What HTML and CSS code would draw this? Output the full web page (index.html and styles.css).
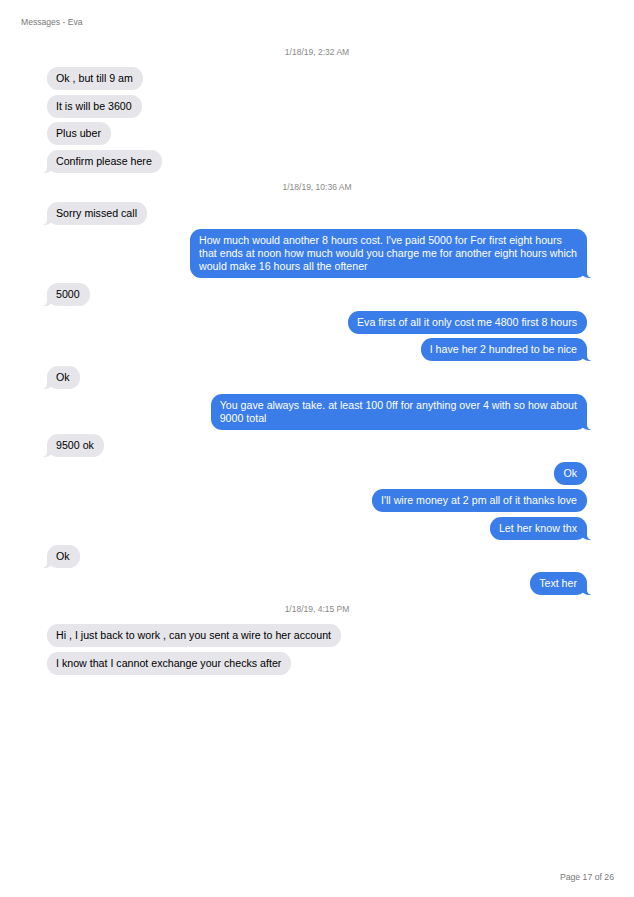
FILE: index.html
```html
<!DOCTYPE html>
<html lang="en">
<head>
  <meta charset="UTF-8" />
  <title>Messages - Eva</title>
  <link rel="stylesheet" href="styles.css">
</head>
<body>
  <div class="page">
    <div class="page-header">Messages - Eva</div>

    <div class="thread">
      <div class="stamp">1/18/19, 2:32 AM</div>
      <div class="msg them">Ok , but till 9 am</div>
      <div class="msg them">It is will be 3600</div>
      <div class="msg them">Plus uber</div>
      <div class="msg them tail">Confirm please here</div>

      <div class="stamp">1/18/19, 10:36 AM</div>
      <div class="msg them tail">Sorry missed call</div>
      <div class="msg me tail">How much would another 8 hours cost. I've paid 5000 for For first eight hours<br>that ends at noon how much would you charge me for another eight hours which<br>would make 16 hours all the oftener</div>
      <div class="msg them tail">5000</div>
      <div class="msg me">Eva first of all it only cost me 4800 first 8 hours</div>
      <div class="msg me tail">I have her 2 hundred to be nice</div>
      <div class="msg them tail">Ok</div>
      <div class="msg me tail">You gave always take. at least 100 0ff for anything over 4 with so how about<br>9000 total</div>
      <div class="msg them tail">9500 ok</div>
      <div class="msg me">Ok</div>
      <div class="msg me">I'll wire money at 2 pm all of it thanks love</div>
      <div class="msg me tail">Let her know thx</div>
      <div class="msg them tail">Ok</div>
      <div class="msg me tail">Text her</div>

      <div class="stamp">1/18/19, 4:15 PM</div>
      <div class="msg them">Hi , I just back to work , can you sent a wire to her account</div>
      <div class="msg them">I know that I cannot exchange your checks after</div>
    </div>

    <div class="page-footer">Page 17 of 26</div>
  </div>
</body>
</html>
```

FILE: styles.css
```css
body { margin: 0; background: #fff; font-family: "Liberation Sans", Arial, sans-serif; }
.page {
  min-height: 897px;
  display: flex;
  flex-direction: column;
}
.page-header {
  padding: 16px 0 0 21px;
  font-size: 8.6px;
  line-height: 12px;
  color: #777;
}
.thread {
  display: flex;
  flex-direction: column;
  gap: 4.65px;
  padding: 0 47px;
  margin-top: 15px;
}
.stamp {
  text-align: center;
  font-size: 8.5px;
  line-height: 19.4px;
  color: #888;
}
.msg {
  position: relative;
  font-size: 10.65px;
  line-height: 13px;
  padding: 5px 10px 5px 9px;
  border-radius: 11px;
  white-space: nowrap;
}
.them {
  align-self: flex-start;
  background: #e5e5ea;
  color: #000;
}
.me {
  align-self: flex-end;
  background: #3a7de8;
  color: #fff;
}

/* little hook on the last bubble of a run */
.tail::before,
.tail::after {
  content: "";
  position: absolute;
  bottom: 0;
  height: 10px;
}
.me.tail::before {
  right: -4px;
  width: 10px;
  background: #3a7de8;
  border-bottom-left-radius: 8px 7px;
}
.me.tail::after {
  right: -13px;
  width: 13px;
  background: #fff;
  border-bottom-left-radius: 5px;
}
.them.tail::before {
  left: -4px;
  width: 10px;
  background: #e5e5ea;
  border-bottom-right-radius: 8px 7px;
}
.them.tail::after {
  left: -13px;
  width: 13px;
  background: #fff;
  border-bottom-right-radius: 5px;
}

.page-footer {
  margin-top: auto;
  align-self: flex-end;
  padding: 0 20px 14px 0;
  font-size: 8.7px;
  line-height: 12px;
  color: #777;
}
```
